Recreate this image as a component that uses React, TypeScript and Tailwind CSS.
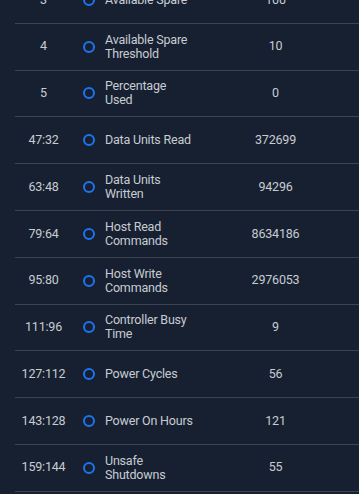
const rows = [
  { id: '3', name: 'Available Spare', value: '100' },
  { id: '4', name: 'Available Spare Threshold', value: '10' },
  { id: '5', name: 'Percentage Used', value: '0' },
  { id: '47:32', name: 'Data Units Read', value: '372699' },
  { id: '63:48', name: 'Data Units Written', value: '94296' },
  { id: '79:64', name: 'Host Read Commands', value: '8634186' },
  { id: '95:80', name: 'Host Write Commands', value: '2976053' },
  { id: '111:96', name: 'Controller Busy Time', value: '9' },
  { id: '127:112', name: 'Power Cycles', value: '56' },
  { id: '143:128', name: 'Power On Hours', value: '121' },
  { id: '159:144', name: 'Unsafe Shutdowns', value: '55' },
  { id: '175:160', name: 'Media Errors', value: '0' },
];

function StatusDot() {
  return <span className="block h-3 w-3 rounded-full border-[2.5px] border-[#1c74f0]" />;
}

export default function App() {
  return (
    <div
      className="h-[494px] w-[359px] overflow-hidden bg-[#172030] text-[12.5px] tracking-[-0.2px] text-[#c7ccd3]"
      style={{ fontFamily: 'Roboto, "Noto Sans", sans-serif' }}
    >
      <div className="-mt-[23px] ml-[15px] w-[400px]">
        {rows.map((r) => (
          <div key={r.id} className="flex h-[46.8px] items-center border-b border-[#3c4452]">
            <div className="w-[57px] text-center">{r.id}</div>
            <div className="flex w-[33px] justify-center">
              <StatusDot />
            </div>
            <div className="w-[90px] leading-[14px]">{r.name}</div>
            <div className="w-[161px] text-center">{r.value}</div>
          </div>
        ))}
      </div>
    </div>
  );
}
